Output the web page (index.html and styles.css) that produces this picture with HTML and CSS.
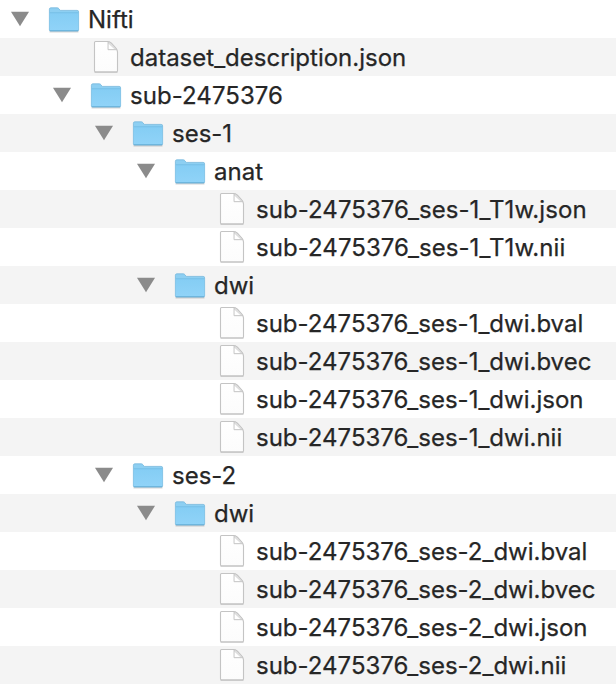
FILE: index.html
```
<!DOCTYPE html>
<html lang="en">
<head>
<meta charset="utf-8">
<title>Nifti</title>
<link rel="stylesheet" href="styles.css">
</head>
<body>
<svg class="defs" width="0" height="0" aria-hidden="true">
  <defs>
    <linearGradient id="front" x1="0" y1="0" x2="0" y2="1"><stop offset="0" stop-color="#84cdf4"/><stop offset="1" stop-color="#90d3f8"/></linearGradient>
    <linearGradient id="paper" x1="0" y1="0" x2="0" y2="1"><stop offset="0" stop-color="#ffffff"/><stop offset="1" stop-color="#fcfcfc"/></linearGradient>
    <symbol id="arrow" viewBox="0 0 18 16"><path d="M0 .8H18L9 15.2Z" fill="#8b8b8b"/></symbol>
    <symbol id="folder" viewBox="0 0 32 28">
      <path d="M1.5 25.8H30.5" stroke="#000" stroke-opacity=".17" stroke-width="1.4"/>
      <path d="M1.4 3.2Q1.4 1.8 3 1.8H9.2Q10.3 1.8 11 2.8L12.2 4.4H29.2Q30.6 4.4 30.6 5.8V24Q30.6 25 29.6 25H2.4Q1.4 25 1.4 24Z" fill="#8dcff2" stroke="#76b7dc" stroke-width=".8"/>
      <path d="M1.7 6.7H30.3V23.6Q30.3 24.5 29.4 24.5H2.6Q1.7 24.5 1.7 23.6Z" fill="url(#front)"/>
      <path d="M1.8 6.7H30.2" stroke="#70bae2" stroke-width=".7"/>
      <path d="M2 24.7H30" stroke="#60a9d2" stroke-width=".8"/>
    </symbol>
    <symbol id="file" viewBox="0 0 26 34">
      <path d="M1.5 32.4H24.5" stroke="#000" stroke-opacity=".16" stroke-width="1.2"/>
      <path d="M1.5 2.5Q1.5 1.5 2.5 1.5H14.7Q16.8 1.5 18.4 3.2L22.6 7.8Q24.5 10 24.5 12V30.8Q24.5 31.8 23.5 31.8H2.5Q1.5 31.8 1.5 30.8Z" fill="url(#paper)" stroke="#c4c4c4" stroke-width="1.1"/>
      <path d="M15 1.8V9.7H23.8Q23 8.2 22 7.2L18 2.9Q16.8 1.8 15 1.8Z" fill="#dedede" stroke="#c4c4c4" stroke-width=".9"/>
      <path d="M15.7 4V9H21.2Z" fill="#fff"/>
    </symbol>
  </defs>
</svg>
<main class="tree">
  <div class="row d0"><svg class="arrow"><use href="#arrow"/></svg><svg class="folder"><use href="#folder"/></svg><span class="name">Nifti</span></div>
  <div class="row d1"><svg class="file"><use href="#file"/></svg><span class="name">dataset_description.json</span></div>
  <div class="row d1"><svg class="arrow"><use href="#arrow"/></svg><svg class="folder"><use href="#folder"/></svg><span class="name loose">sub-2475376</span></div>
  <div class="row d2"><svg class="arrow"><use href="#arrow"/></svg><svg class="folder"><use href="#folder"/></svg><span class="name">ses-1</span></div>
  <div class="row d3"><svg class="arrow"><use href="#arrow"/></svg><svg class="folder"><use href="#folder"/></svg><span class="name">anat</span></div>
  <div class="row d4"><svg class="file"><use href="#file"/></svg><span class="name loose">sub-2475376_ses-1_T1w.json</span></div>
  <div class="row d4"><svg class="file"><use href="#file"/></svg><span class="name loose">sub-2475376_ses-1_T1w.nii</span></div>
  <div class="row d3"><svg class="arrow"><use href="#arrow"/></svg><svg class="folder"><use href="#folder"/></svg><span class="name">dwi</span></div>
  <div class="row d4"><svg class="file"><use href="#file"/></svg><span class="name">sub-2475376_ses-1_dwi.bval</span></div>
  <div class="row d4"><svg class="file"><use href="#file"/></svg><span class="name">sub-2475376_ses-1_dwi.bvec</span></div>
  <div class="row d4"><svg class="file"><use href="#file"/></svg><span class="name">sub-2475376_ses-1_dwi.json</span></div>
  <div class="row d4"><svg class="file"><use href="#file"/></svg><span class="name">sub-2475376_ses-1_dwi.nii</span></div>
  <div class="row d2"><svg class="arrow"><use href="#arrow"/></svg><svg class="folder"><use href="#folder"/></svg><span class="name">ses-2</span></div>
  <div class="row d3"><svg class="arrow"><use href="#arrow"/></svg><svg class="folder"><use href="#folder"/></svg><span class="name">dwi</span></div>
  <div class="row d4"><svg class="file"><use href="#file"/></svg><span class="name">sub-2475376_ses-2_dwi.bval</span></div>
  <div class="row d4"><svg class="file"><use href="#file"/></svg><span class="name">sub-2475376_ses-2_dwi.bvec</span></div>
  <div class="row d4"><svg class="file"><use href="#file"/></svg><span class="name">sub-2475376_ses-2_dwi.json</span></div>
  <div class="row d4"><svg class="file"><use href="#file"/></svg><span class="name">sub-2475376_ses-2_dwi.nii</span></div>
</main>
</body>
</html>
```
FILE: styles.css
```
body {
  margin: 0;
  background: #fff;
  color: #262626;
  font: 400 24px/38px Inter, "Liberation Sans", sans-serif;
  overflow: hidden;
}
.defs { position: absolute; }
.row {
  display: grid;
  grid-template-columns: 37px 32px 1fr;
  padding-left: 11px;
  height: 38px;
  align-items: start;
}
.row:nth-child(even) { background: #f4f4f4; }
.d1 { padding-left: 53px; }
.d2 { padding-left: 95px; }
.d3 { padding-left: 137px; }
.d4 { padding-left: 179px; }
.arrow { width: 18px; height: 16px; margin-top: 11px; }
.folder { grid-column: 2; width: 32px; height: 28px; margin-top: 6px; }
.file { grid-column: 2; justify-self: center; width: 26px; height: 34px; margin-top: 2px; }
.name {
  grid-column: 3;
  height: 37px;
  padding: 1px 0 0 8px;
  white-space: nowrap;
  -webkit-text-stroke: .25px #262626;
}
.loose { letter-spacing: .06px; }
```
